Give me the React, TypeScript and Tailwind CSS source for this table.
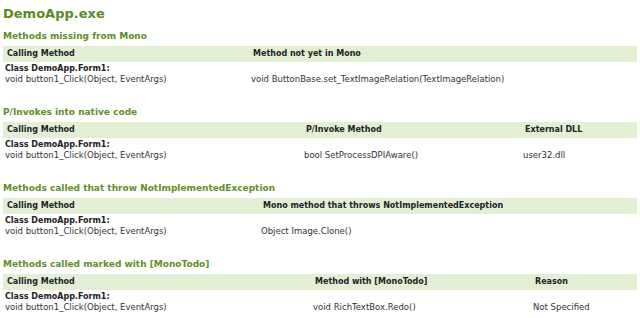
import React from "react";

type Section = {
  title: string;
  cols: string;
  headers: string[];
  cells: string[];
};

const sections: Section[] = [
  {
    title: "Methods missing from Mono",
    cols: "grid-cols-[246px_1fr]",
    headers: ["Calling Method", "Method not yet in Mono"],
    cells: ["void ButtonBase.set_TextImageRelation(TextImageRelation)"],
  },
  {
    title: "P/Invokes into native code",
    cols: "grid-cols-[299px_219px_1fr]",
    headers: ["Calling Method", "P/Invoke Method", "External DLL"],
    cells: ["bool SetProcessDPIAware()", "user32.dll"],
  },
  {
    title: "Methods called that throw NotImplementedException",
    cols: "grid-cols-[256px_1fr]",
    headers: ["Calling Method", "Mono method that throws NotImplementedException"],
    cells: ["Object Image.Clone()"],
  },
  {
    title: "Methods called marked with [MonoTodo]",
    cols: "grid-cols-[308px_220px_1fr]",
    headers: ["Calling Method", "Method with [MonoTodo]", "Reason"],
    cells: ["void RichTextBox.Redo()", "Not Specified"],
  },
];

const App = () => {
  return (
    <div className="w-[640px] h-[318px] overflow-hidden bg-white px-[3px] pt-[4px] font-['DejaVu_Sans',Verdana,sans-serif]">
      <h1 className="text-[13px] leading-[20px] font-bold text-[#5b8a1f]">DemoApp.exe</h1>
      {sections.map((s, i) => (
        <div key={i} className={i === 0 ? "mt-[5px]" : "mt-[21px]"}>
          <h2 className="text-[9px] leading-[14px] font-bold text-[#5e8e28]">{s.title}</h2>
          <div className={`grid ${s.cols} mt-[3px]`}>
            {s.headers.map((h) => (
              <div
                key={h}
                className="h-[16px] flex items-center bg-[#e3efd5] pl-[4px] text-[8px] font-bold text-[#222]"
              >
                {h}
              </div>
            ))}
            <div className="pl-[2px] pt-[2px] text-[8.5px] leading-[10px] text-[#333]">
              <div className="font-bold text-[8px] text-[#222]">Class DemoApp.Form1:</div>
              <div>void button1_Click(Object, EventArgs)</div>
            </div>
            {s.cells.map((c) => (
              <div key={c} className="pl-[2px] pt-[2px] flex items-end text-[8.5px] leading-[10px] text-[#333]">
                {c}
              </div>
            ))}
          </div>
        </div>
      ))}
    </div>
  );
};

export default App;
